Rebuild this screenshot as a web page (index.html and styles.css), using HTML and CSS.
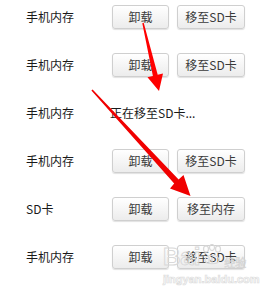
FILE: index.html
```html
<!DOCTYPE html>
<html lang="zh">
<head>
<meta charset="utf-8">
<link rel="stylesheet" href="styles.css">
</head>
<body>
<div class="page">
  <div class="list">
    <div class="row"><span class="label">手机内存</span><button class="btn btn-a">卸载</button><button class="btn btn-b">移至SD卡</button></div>
    <div class="row"><span class="label">手机内存</span><button class="btn btn-a">卸载</button><button class="btn btn-b">移至SD卡</button></div>
    <div class="row"><span class="label">手机内存</span><span class="status">正在移至SD卡...</span></div>
    <div class="row"><span class="label">手机内存</span><button class="btn btn-a">卸载</button><button class="btn btn-b">移至SD卡</button></div>
    <div class="row"><span class="label">SD卡</span><button class="btn btn-a">卸载</button><button class="btn btn-b">移至内存</button></div>
    <div class="row"><span class="label">手机内存</span><button class="btn btn-a">卸载</button><button class="btn btn-b">移至SD卡</button></div>
  </div>
  <div class="watermark">
    <div class="wm-logo"><span class="wm-bai">Bai</span><svg class="wm-paw" width="22" height="24" viewBox="0 0 22 24"><g fill="none" stroke="#d8d8d8" stroke-width="1.2"><ellipse cx="5" cy="5" rx="2.5" ry="3.2"/><ellipse cx="11" cy="3.5" rx="2.5" ry="3"/><ellipse cx="17" cy="5" rx="2.5" ry="3.2"/><path d="M4 16 C4 10 18 10 18 16 C18 21 4 21 4 16 Z"/><path d="M8 13 v6 M8 16 h3 M11 13 v6"/></g></svg><span class="wm-jy">经验</span></div>
    <div class="wm-url">jingyan.baidu.com</div>
  </div>
  <svg class="arrows" width="280" height="294" viewBox="0 0 280 294">
    <polygon fill="#ff0000" points="143.7,22.8 157.7,74.8 163,73.6 159,91 147.5,77.2 152.9,76 142.3,23.2"/>
    <polygon fill="#f00000" points="92.6,89.4 178.6,179.4 183.5,175 190.5,196 170,188.5 174.2,183.4 91.4,90.6"/>
  </svg>
</div>
</body>
</html>
```
FILE: styles.css
```css
html, body {
  margin: 0;
  padding: 0;
  background: #ffffff;
}
.page {
  position: relative;
  width: 280px;
  height: 294px;
  overflow: hidden;
  font-family: "Noto Sans CJK SC", "Noto Sans", sans-serif;
  font-size: 12px;
  color: #1a1a1a;
}
.list {
  display: flex;
  flex-direction: column;
  gap: 24px;
  padding: 5px 0 0 26px;
}
.row {
  display: flex;
  align-items: center;
  height: 24px;
}
.label {
  width: 86px;
  line-height: 16px;
}
.status {
  margin-left: -2px;
  line-height: 16px;
}
.btn {
  height: 24px;
  margin: 0 8px 0 0;
  padding: 0;
  border: 1px solid #cfcfcf;
  border-radius: 3px;
  background: linear-gradient(#ffffff, #ececec);
  box-shadow: 0 1px 1px rgba(0, 0, 0, 0.12);
  font-family: inherit;
  font-size: 12px;
  color: #3a3a3a;
  line-height: 16px;
}
.btn-a { width: 57px; }
.btn-b { width: 68px; }
.watermark {
  position: absolute;
  left: 163px;
  top: 243px;
  width: 100px;
  pointer-events: none;
}
.wm-logo {
  display: flex;
  align-items: flex-end;
  height: 26px;
}
.wm-bai {
  font-family: "Liberation Sans", sans-serif;
  font-weight: bold;
  font-size: 24px;
  line-height: 24px;
  color: transparent;
  -webkit-text-stroke: 1px #d9d9d9;
}
.wm-paw {
  margin: 0 1px 1px 1px;
}
.wm-jy {
  font-size: 11px;
  line-height: 14px;
  color: transparent;
  -webkit-text-stroke: 0.6px #d4d4d4;
}
.wm-url {
  margin-top: 4px;
  font-family: "Liberation Sans", sans-serif;
  font-weight: bold;
  font-size: 11px;
  line-height: 12px;
  color: transparent;
  -webkit-text-stroke: 0.7px #dcdcdc;
}
.arrows {
  position: absolute;
  left: 0;
  top: 0;
  pointer-events: none;
}
```
